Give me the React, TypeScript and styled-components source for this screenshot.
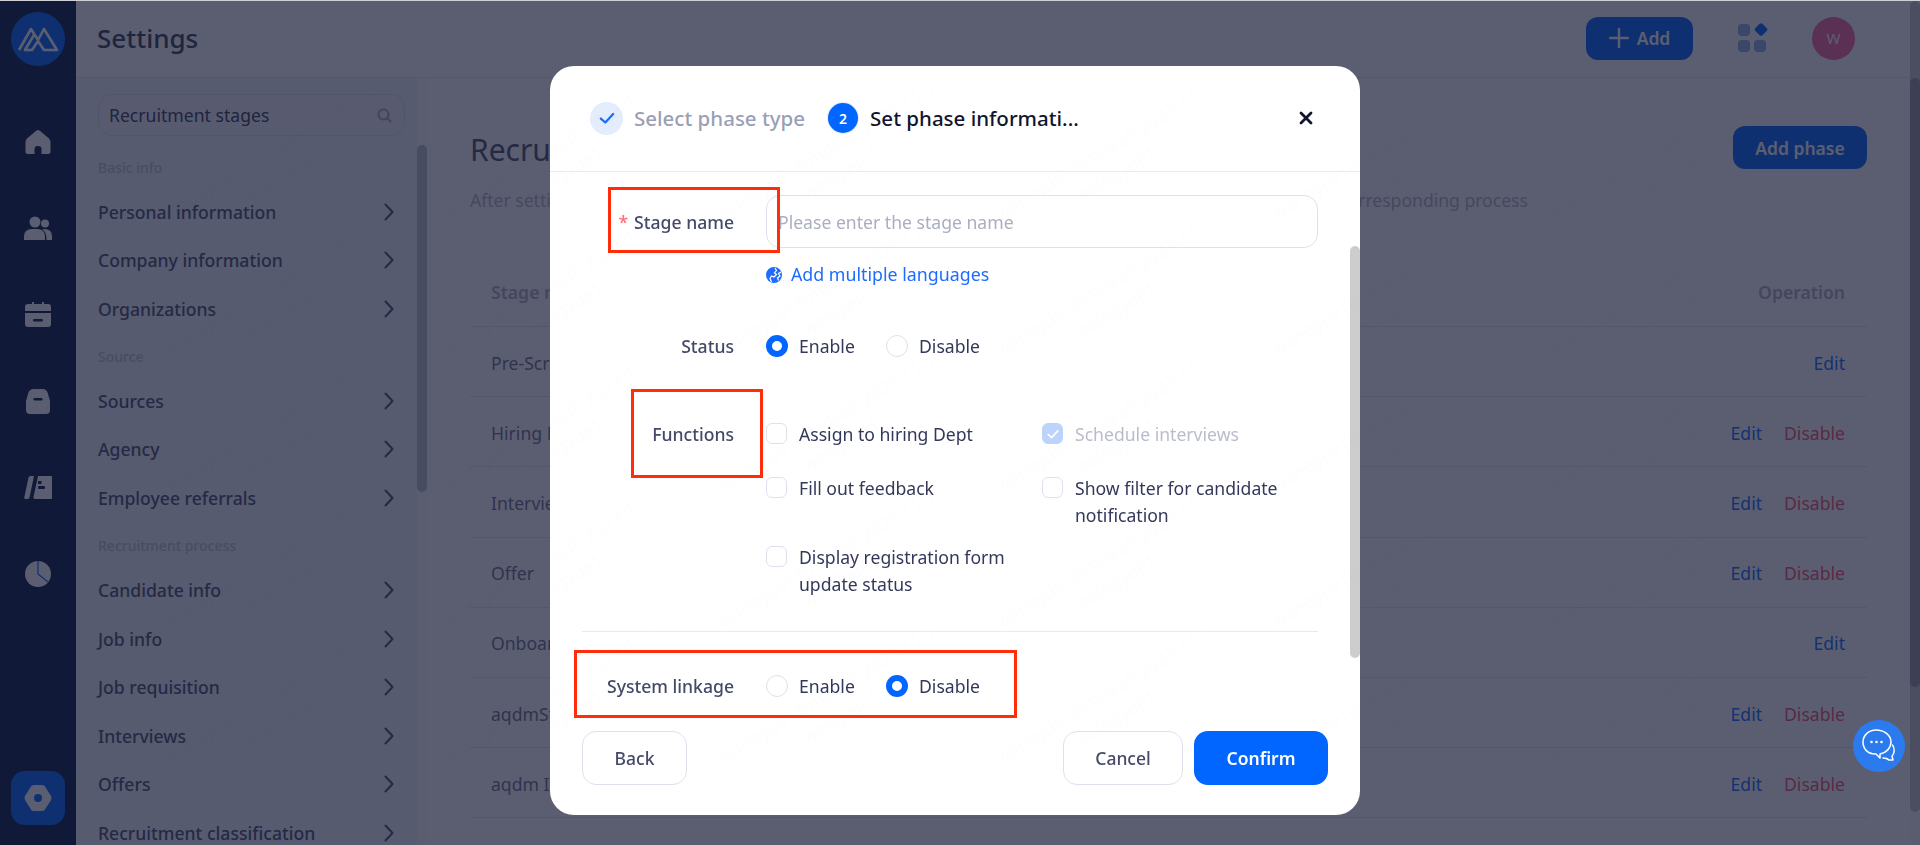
import React from "react";
import styled, { createGlobalStyle } from "styled-components";

const GlobalStyle = createGlobalStyle`
  html, body {
    margin: 0;
    padding: 0;
    height: 100%;
    overflow: hidden;
  }
  * {
    box-sizing: border-box;
  }
  body {
    font-family: "Noto Sans", "Open Sans", sans-serif;
    font-size: 17.6px;
    color: #373c5c;
    background: #fff;
  }
`

const Page = styled.div`
  display: flex;
  height: 845px;
  border-top: 1px solid #cfd0d4;
  overflow: hidden;
`

const Sidebar = styled.nav`
  flex: 0 0 76px;
  display: flex;
  flex-direction: column;
  align-items: center;
  padding: 11px 0 20px;
  background: #051940;
`

const LogoCircle = styled.div`
  width: 54px;
  height: 54px;
  margin-bottom: 33px;
  border-radius: 50%;
  background: #0066ff;
  display: flex;
  align-items: center;
  justify-content: center;
`

const NavIcon = styled.div`
  height: 86.3px;
  display: flex;
  align-items: center;
  justify-content: center;
`

const ActiveNav = styled.div`
  width: 54px;
  height: 54px;
  margin-top: auto;
  border-radius: 14px;
  background: #0066ff;
  display: flex;
  align-items: center;
  justify-content: center;
`

const Workspace = styled.div`
  flex: 1;
  min-width: 0;
  display: flex;
  flex-direction: column;
`

const TopBar = styled.header`
  flex: 0 0 77px;
  display: flex;
  align-items: center;
  padding: 0 55px 2px 21px;
  border-bottom: 1px solid #e6e7ee;
  background: #fff;
`

const PageTitle = styled.h1`
  flex: 1;
  margin: 0;
  font-size: 26px;
  font-weight: 500;
  color: #373c5c;
`

const AddButton = styled.button`
  width: 107px;
  height: 43px;
  display: flex;
  align-items: center;
  justify-content: center;
  gap: 8px;
  border: 0;
  border-radius: 12px;
  background: #0066ff;
  color: #fff;
  font: 600 17.5px "Noto Sans", sans-serif;
`

const AppsIcon = styled.div`
  margin: 0 44px 0 45px;
  display: flex;
`

const Avatar = styled.div`
  width: 43px;
  height: 43px;
  border-radius: 50%;
  background: #fa64a3;
  color: #fff;
  font-size: 15px;
  display: flex;
  align-items: center;
  justify-content: center;
`

const Columns = styled.div`
  flex: 1;
  min-height: 0;
  display: flex;
`

const SubMenu = styled.aside`
  flex: 0 0 351px;
  display: flex;
  background: #eff3fa;
`

const SubMenuInner = styled.div`
  flex: 1;
  min-width: 0;
  padding: 16px 12px 0 22px;
`

const SearchBox = styled.div`
  height: 42px;
  margin-bottom: 8px;
  padding: 0 12px 0 10px;
  display: flex;
  align-items: center;
  justify-content: space-between;
  border: 1px solid #dfe1ec;
  border-radius: 14px;
  background: #f4f6fb;
  color: #373c5c;
`

const SectionTitle = styled.div`
  height: 43.4px;
  padding-top: 3px;
  display: flex;
  align-items: center;
  font-size: 14px;
  font-weight: 500;
  color: #c0c3d4;
`

const MenuItem = styled.div`
  height: 48.6px;
  display: flex;
  align-items: center;
  justify-content: space-between;
  padding-right: 11px;
  font-size: 17.6px;
  font-weight: 500;
  color: #4a4f70;
`

const Scrollbar = styled.div`
  flex: 0 0 10px;
  position: relative;
  background: #fcfcfd;
`

const ScrollThumb = styled.div<{ $top: number; $height: number; $color: string }>`
  position: absolute;
  left: 0;
  right: 0;
  top: ${(p) => p.$top}px;
  height: ${(p) => p.$height}px;
  border-radius: 5px;
  background: ${(p) => p.$color};
`

const Main = styled.main`
  flex: 1;
  min-width: 0;
  padding: 48px 43px 0;
`

const MainHead = styled.div`
  display: flex;
  align-items: flex-start;
  justify-content: space-between;
`

const MainTitle = styled.h2`
  margin: 0;
  font-size: 30px;
  line-height: 48px;
  font-weight: 400;
  color: #4a4f70;
`

const PrimaryButton = styled.button`
  width: 134px;
  height: 43px;
  border: 0;
  border-radius: 12px;
  background: #0066ff;
  color: #fff;
  font: 600 17.5px "Noto Sans", sans-serif;
`

const Description = styled.p`
  margin: 14px 0 46px;
  line-height: 24px;
  letter-spacing: -0.02px;
  color: #b5b5c8;
  white-space: nowrap;
`

const TableHead = styled.div`
  height: 69px;
  padding: 0 22px 0 21px;
  display: flex;
  align-items: center;
  justify-content: space-between;
  border-bottom: 1px solid #e6e7ee;
  font-weight: 600;
  color: #b0afc5;
`

const TableRow = styled.div`
  height: 70.2px;
  padding: 2px 22px 0 21px;
  display: flex;
  align-items: center;
  justify-content: space-between;
  border-bottom: 1px solid #e6e7ee;
  color: #6e7090;
`

const RowActions = styled.div`
  display: flex;
  gap: 22px;
`

const ActionLink = styled.a<{ $danger?: boolean }>`
  color: ${(p) => (p.$danger ? "#f94f6f" : "#0b6cff")};
`

const Overlay = styled.div`
  position: fixed;
  top: 1px;
  left: 0;
  right: 0;
  bottom: 0;
  padding: 65px 10px 0 0;
  display: flex;
  justify-content: center;
  align-items: flex-start;
  background: rgba(22, 25, 51, 0.7);
`

const Modal = styled.div`
  position: relative;
  width: 810px;
  height: 749px;
  display: flex;
  flex-direction: column;
  border-radius: 24px;
  background: #fff;
`

const ModalHeader = styled.div`
  flex: 0 0 106px;
  padding: 0 40px 1px;
  display: flex;
  align-items: center;
  border-bottom: 1px solid #e9e9f4;
`

const StepDone = styled.div`
  width: 33px;
  height: 33px;
  margin-right: 11px;
  border-radius: 50%;
  background: #e3edfd;
  display: flex;
  align-items: center;
  justify-content: center;
`

const StepNumber = styled.div`
  width: 30px;
  height: 30px;
  margin: 0 12px 0 23px;
  border-radius: 50%;
  background: #0066ff;
  box-shadow: 0 0 0 1px #e3edfd;
  color: #fff;
  font-size: 14px;
  font-weight: 600;
  display: flex;
  align-items: center;
  justify-content: center;
`

const StepLabel = styled.span<{ $active?: boolean }>`
  font-size: 20.5px;
  font-weight: 500;
  white-space: nowrap;
  color: ${(p) => (p.$active ? "#10142f" : "#9a9fb5")};
`

const CloseButton = styled.div`
  margin-left: auto;
  margin-right: 7px;
  display: flex;
`

const FormBody = styled.div`
  flex: 1;
  padding: 23px 42px 0 32px;
`

const FormRow = styled.div<{ $top?: number }>`
  display: grid;
  grid-template-columns: 152px 1fr;
  column-gap: 32px;
  margin-top: ${(p) => p.$top ?? 0}px;
`

const RowLabel = styled.label`
  padding-top: 1px;
  text-align: right;
  font-weight: 500;
  line-height: 27px;
  color: #454a68;
`

const CenteredLabel = styled(RowLabel)`
  align-self: center;
  white-space: nowrap;
`

const Asterisk = styled.span`
  margin-right: 6px;
  color: #ff6b6f;
`

const TextInput = styled.div`
  height: 53px;
  padding: 0 11px;
  display: flex;
  align-items: center;
  border: 1px solid #e0e0ec;
  border-radius: 14px;
  color: #aaaec1;
`

const LangLink = styled.div`
  display: flex;
  align-items: center;
  gap: 9px;
  font-size: 17.8px;
  line-height: 27px;
  color: #1e6cff;
`

const RadioGroup = styled.div`
  display: flex;
  align-items: center;
`

const RadioOption = styled.div`
  width: 120px;
  display: flex;
  align-items: center;
  gap: 11px;
  line-height: 27px;
  color: #33385a;
`

const RadioDot = styled.span<{ $on?: boolean }>`
  width: 22px;
  height: 22px;
  border-radius: 50%;
  background: #fff;
  border: ${(p) => (p.$on ? "6px solid #0066ff" : "1px solid #e0e0ec")};
`

const CheckGrid = styled.div`
  display: grid;
  grid-template-columns: 276px 276px;
  grid-auto-rows: minmax(40px, auto);
  row-gap: 14px;
`

const CheckOption = styled.div<{ $disabled?: boolean }>`
  display: flex;
  align-items: flex-start;
  gap: 12px;
  padding-top: 1px;
  line-height: 27px;
  color: ${(p) => (p.$disabled ? "#b9bccd" : "#33385a")};
`

const CheckBox = styled.span<{ $on?: boolean }>`
  flex: 0 0 21px;
  height: 21px;
  margin-top: 2px;
  border-radius: 6px;
  border: 1px solid ${(p) => (p.$on ? "#bcd3fb" : "#e0e0ec")};
  background: ${(p) => (p.$on ? "#bcd3fb" : "#fff")};
  display: flex;
  align-items: center;
  justify-content: center;
`

const Divider = styled.div`
  height: 1px;
  margin-top: 33px;
  background: #e9e9f4;
`

const ModalFooter = styled.div`
  margin: 31px 32px 32px;
  display: flex;
  gap: 11px;
`

const GhostButton = styled.button<{ $wide?: boolean }>`
  width: ${(p) => (p.$wide ? 120 : 105)}px;
  height: 54px;
  border: 1px solid #e0e0ec;
  border-radius: 14px;
  background: #fff;
  color: #454a68;
  font: 500 17.5px "Noto Sans", sans-serif;
  &:first-child {
    margin-right: auto;
  }
`

const ConfirmButton = styled.button`
  width: 134px;
  height: 54px;
  border: 0;
  border-radius: 14px;
  background: #0066ff;
  color: #fff;
  font: 600 17.5px "Noto Sans", sans-serif;
`

const ModalThumb = styled.div`
  position: absolute;
  top: 180px;
  right: 0;
  width: 10px;
  height: 412px;
  border-radius: 5px;
  background: #cdcdcd;
`

const Annotation = styled.div<{ $x: number; $y: number; $w: number; $h: number }>`
  position: absolute;
  left: ${(p) => p.$x}px;
  top: ${(p) => p.$y}px;
  width: ${(p) => p.$w}px;
  height: ${(p) => p.$h}px;
  border: 3px solid #ff2d0a;
  pointer-events: none;
`

const Watermark = styled.div`
  position: fixed;
  top: 93px;
  left: 141px;
  display: grid;
  grid-template-columns: repeat(6, 277px);
  grid-auto-rows: 136px;
  pointer-events: none;
`

const WatermarkTile = styled.div`
  display: flex;
  flex-direction: column;
  align-items: center;
  justify-content: center;
  transform: rotate(-31deg);
  font-size: 18px;
  line-height: 26px;
  color: rgba(30, 30, 70, 0.012);
  white-space: nowrap;
`

const ChatButton = styled.div`
  position: fixed;
  left: 1853px;
  top: 720px;
  width: 52px;
  height: 52px;
  border-radius: 50%;
  background: #2b7bef;
  display: flex;
  align-items: center;
  justify-content: center;
`

const Chevron = () => (
  <svg width="10" height="18" viewBox="0 0 10 18" fill="none">
    <path d="M1.5 1.5L8.5 9L1.5 16.5" stroke="#4a4f70" strokeWidth="2" strokeLinecap="round" strokeLinejoin="round" />
  </svg>
);

const Tick = ({ color, size }: { color: string; size: number }) => (
  <svg width={size} height={size} viewBox="0 0 16 16" fill="none">
    <path d="M2.5 8.5L6.5 12L13.5 4.5" stroke={color} strokeWidth="2" strokeLinecap="round" strokeLinejoin="round" />
  </svg>
);

const LogoMark = () => (
  <svg width="42" height="26" viewBox="0 0 42 26" fill="none" stroke="#fff" strokeWidth="2.6" strokeLinejoin="round">
    <path d="M2 24L14 3L21 14L27 3L40 24H27L21 15L15 24H8L17 9" />
  </svg>
);

const HomeIcon = () => (
  <svg width="26" height="26" viewBox="0 0 26 26" fill="#fff">
    <path d="M11.5 1.5Q13 .4 14.5 1.5L24 9.5Q25.5 11 25.5 13V22.5Q25.5 25 23 25H16.5V20Q16.5 17 13 17T9.5 20V25H3Q.5 25 .5 22.5V13Q.5 11 2 9.5Z" />
  </svg>
);

const PeopleIcon = () => (
  <svg width="28" height="24" viewBox="0 0 28 24" fill="#fff">
    <circle cx="11" cy="6" r="5.5" />
    <path d="M0 24V20.5Q0 13 8 13H13Q21 13 21 20.5V24Z" />
    <circle cx="21" cy="7.5" r="4" />
    <path d="M22.5 24H28V20Q28 14 21.5 13Q19 13 18 13.5Q23 16 22.5 24Z" />
  </svg>
);

const CalendarIcon = () => (
  <svg width="26" height="25" viewBox="0 0 26 25">
    <path fill="#fff" d="M7 0H9V2H17V0H19V2H23Q26 2 26 5V9H0V5Q0 2 3 2H7ZM0 11H26V22Q26 25 23 25H3Q0 25 0 22Z" />
    <rect x="8" y="17" width="10" height="2.4" rx="1.2" fill="#051940" />
  </svg>
);

const BagIcon = () => (
  <svg width="24" height="25" viewBox="0 0 24 25">
    <path fill="#fff" d="M8 0H16Q21 0 22 5L24 12V21Q24 25 20 25H4Q0 25 0 21V12L2 5Q3 0 8 0Z" />
    <rect x="7.5" y="9" width="9" height="2.4" rx="1.2" fill="#051940" />
  </svg>
);

const BookIcon = () => (
  <svg width="28" height="23" viewBox="0 0 28 23">
    <path fill="#fff" d="M4.5 1.5Q5 0 6.500 0H10L5.500 21.500Q5 23 3.500 23H1.500Q0 23 .3 21.500Z" />
    <path fill="#fff" d="M14 0H27Q28 0 28 1V22Q28 23 27 23H11Q9 23 9.500 21Z" />
    <rect x="14" y="5" width="3.500" height="3" fill="#051940" />
    <rect x="14" y="10" width="7" height="3" rx="1" fill="#051940" />
  </svg>
);

const PieIcon = () => (
  <svg width="26" height="26" viewBox="0 0 26 26">
    <circle cx="13" cy="13" r="13" fill="#fff" />
    <path d="M13 0V13L23 21" fill="none" stroke="#0066ff" strokeWidth="1.200" />
  </svg>
);

const NutIcon = () => (
  <svg width="28" height="26" viewBox="0 0 28 26">
    <path fill="#fff" d="M7 1.500Q8 0 10 0H18Q20 0 21 1.500L27 11Q28 13 27 15L21 24.500Q20 26 18 26H10Q8 26 7 24.500L1 15Q0 13 1 11Z" />
    <circle cx="14" cy="13" r="4" fill="#0066ff" />
  </svg>
);

const SearchGlyph = () => (
  <svg width="15" height="15" viewBox="0 0 15 15" fill="none" stroke="#a7abbd" strokeWidth="2" strokeLinecap="round">
    <circle cx="6.500" cy="6.500" r="5" />
    <path d="M10.500 10.500L13.500 13.500" />
  </svg>
);

const PlusGlyph = () => (
  <svg width="20" height="20" viewBox="0 0 20 20" stroke="#fff" strokeWidth="2.400" strokeLinecap="round">
    <path d="M10 1V19M1 10H19" />
  </svg>
);

const AppsGlyph = () => (
  <svg width="30" height="30" viewBox="0 0 30 30">
    <rect x="0" y="1" width="12" height="12" rx="3.500" fill="#3d72d0" opacity="0.55" />
    <rect x="0" y="17" width="12" height="12" rx="3.500" fill="#3d72d0" opacity="0.55" />
    <rect x="16" y="17" width="12" height="12" rx="3.500" fill="#3d72d0" opacity="0.55" />
    <rect x="18" y="1.500" width="10" height="10" rx="2" fill="#0066ff" transform="rotate(45 23 6.500)" />
  </svg>
);

const CloseGlyph = () => (
  <svg width="14" height="14" viewBox="0 0 14 14" stroke="#10142f" strokeWidth="2.800" strokeLinecap="round">
    <path d="M2 2L12 12M12 2L2 12" />
  </svg>
);

const GlobeGlyph = () => (
  <svg width="16" height="16" viewBox="0 0 16 16" fill="none">
    <circle cx="8" cy="8" r="8" fill="#1e6cff" />
    <path d="M9 1L10.500 3.500L8.500 6L10.500 7.500L8 10L5.500 9L4 11.500L5.500 15" stroke="#fff" strokeWidth="1.200" />
    <path d="M15 5L12.500 6.500L14 9L11.500 11L12.500 13.500" stroke="#fff" strokeWidth="1.200" />
  </svg>
);

const ChatGlyph = () => (
  <svg width="36" height="36" viewBox="0 0 36 36" fill="none" stroke="#fff" strokeWidth="1.500" strokeLinecap="round" strokeLinejoin="round">
    <path d="M15 2C8 2 2 7 2 14C2 21 7 26 14 26H15L19 30V26C25 25 30 20 30 14C30 7 23 2 15 2Z" />
    <path d="M31.500 17C34 20 33.500 26 31 28L32 32H28L25.500 30.500L22 30" />
    <circle cx="10.500" cy="14" r="1.300" fill="#fff" stroke="none" />
    <circle cx="15.500" cy="14" r="1.300" fill="#fff" stroke="none" />
    <circle cx="20.500" cy="14" r="1.300" fill="#fff" stroke="none" />
  </svg>
);

type MenuGroup = { title: string; items: string[] };

const menuGroups: MenuGroup[] = [
  { title: "Basic info", items: ["Personal information", "Company information", "Organizations"] },
  { title: "Source", items: ["Sources", "Agency", "Employee referrals"] },
  {
    title: "Recruitment process",
    items: ["Candidate info", "Job info", "Job requisition", "Interviews", "Offers", "Recruitment classification"],
  },
];

const stageRows = [
  { name: "Pre-Screening", canDisable: false },
  { name: "Hiring Manager", canDisable: true },
  { name: "Interview", canDisable: true },
  { name: "Offer", canDisable: true },
  { name: "Onboarding", canDisable: false },
  { name: "aqdmStage", canDisable: true },
  { name: "aqdm Interview", canDisable: true },
];

const App = () => {
  return (
    <>
      <GlobalStyle />
      <Page>
        <Sidebar>
          <LogoCircle><LogoMark /></LogoCircle>
          <NavIcon><HomeIcon /></NavIcon>
          <NavIcon><PeopleIcon /></NavIcon>
          <NavIcon><CalendarIcon /></NavIcon>
          <NavIcon><BagIcon /></NavIcon>
          <NavIcon><BookIcon /></NavIcon>
          <NavIcon><PieIcon /></NavIcon>
          <ActiveNav><NutIcon /></ActiveNav>
        </Sidebar>
        <Workspace>
          <TopBar>
            <PageTitle>Settings</PageTitle>
            <AddButton><PlusGlyph />Add</AddButton>
            <AppsIcon><AppsGlyph /></AppsIcon>
            <Avatar>W</Avatar>
          </TopBar>
          <Columns>
            <SubMenu>
              <SubMenuInner>
                <SearchBox>
                  Recruitment stages
                  <SearchGlyph />
                </SearchBox>
                {menuGroups.map((group) => (
                  <div key={group.title}>
                    <SectionTitle>{group.title}</SectionTitle>
                    {group.items.map((item) => (
                      <MenuItem key={item}>
                        {item}
                        <Chevron />
                      </MenuItem>
                    ))}
                  </div>
                ))}
              </SubMenuInner>
              <Scrollbar>
                <ScrollThumb $top={67} $height={347} $color="#bdc1cb" />
              </Scrollbar>
            </SubMenu>
            <Main>
              <MainHead>
                <MainTitle>Recruitment stages</MainTitle>
                <PrimaryButton>Add phase</PrimaryButton>
              </MainHead>
              <Description>
                After setting up the recruitment stages, candidates can be moved through each stage and handled in the corresponding process
              </Description>
              <TableHead>
                <span>Stage name</span>
                <span>Operation</span>
              </TableHead>
              {stageRows.map((row) => (
                <TableRow key={row.name}>
                  <span>{row.name}</span>
                  <RowActions>
                    <ActionLink>Edit</ActionLink>
                    {row.canDisable && <ActionLink $danger>Disable</ActionLink>}
                  </RowActions>
                </TableRow>
              ))}
            </Main>
          </Columns>
        </Workspace>
        <Scrollbar>
          <ScrollThumb $top={0} $height={811} $color="#c8c9ce" />
          <ScrollThumb $top={77} $height={609} $color="#9a9ca5" />
        </Scrollbar>
      </Page>

      <Overlay>
        <Modal>
          <ModalHeader>
            <StepDone><Tick color="#1e6cff" size={18} /></StepDone>
            <StepLabel>Select phase type</StepLabel>
            <StepNumber>2</StepNumber>
            <StepLabel $active>Set phase informati...</StepLabel>
            <CloseButton><CloseGlyph /></CloseButton>
          </ModalHeader>
          <FormBody>
            <FormRow>
              <CenteredLabel><Asterisk>*</Asterisk>Stage name</CenteredLabel>
              <TextInput>Please enter the stage name</TextInput>
            </FormRow>
            <FormRow $top={13}>
              <span />
              <LangLink><GlobeGlyph />Add multiple languages</LangLink>
            </FormRow>
            <FormRow $top={44}>
              <RowLabel>Status</RowLabel>
              <RadioGroup>
                <RadioOption><RadioDot $on />Enable</RadioOption>
                <RadioOption><RadioDot />Disable</RadioOption>
              </RadioGroup>
            </FormRow>
            <FormRow $top={60}>
              <RowLabel>Functions</RowLabel>
              <CheckGrid>
                <CheckOption><CheckBox />Assign to hiring Dept</CheckOption>
                <CheckOption $disabled>
                  <CheckBox $on><Tick color="#fff" size={14} /></CheckBox>
                  Schedule interviews
                </CheckOption>
                <CheckOption><CheckBox />Fill out feedback</CheckOption>
                <CheckOption><CheckBox />Show filter for candidate notification</CheckOption>
                <CheckOption><CheckBox />Display registration form update status</CheckOption>
              </CheckGrid>
            </FormRow>
            <Divider />
            <FormRow $top={40}>
              <RowLabel>System linkage</RowLabel>
              <RadioGroup>
                <RadioOption><RadioDot />Enable</RadioOption>
                <RadioOption><RadioDot $on />Disable</RadioOption>
              </RadioGroup>
            </FormRow>
          </FormBody>
          <ModalFooter>
            <GhostButton>Back</GhostButton>
            <GhostButton $wide>Cancel</GhostButton>
            <ConfirmButton>Confirm</ConfirmButton>
          </ModalFooter>
          <ModalThumb />
          <Annotation $x={58} $y={121} $w={172} $h={66} />
          <Annotation $x={81} $y={323} $w={132} $h={89} />
          <Annotation $x={24} $y={584} $w={443} $h={68} />
        </Modal>
      </Overlay>

      <Watermark>
        {Array.from({ length: 30 }, (_, i) => (
          <WatermarkTile key={i}>
            <span>wangyue1@mokah 2023-11-1</span>
            <span>wangyue1</span>
          </WatermarkTile>
        ))}
      </Watermark>

      <ChatButton><ChatGlyph /></ChatButton>
    </>
  );
};

export default App;
